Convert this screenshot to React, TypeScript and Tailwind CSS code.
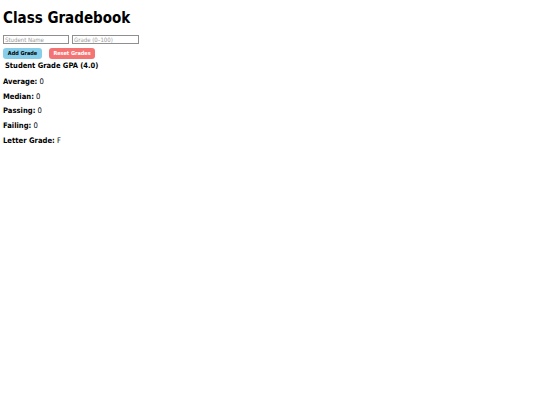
export default function App() {
  const rows = [
    ["Average:", "0"],
    ["Median:", "0"],
    ["Passing:", "0"],
    ["Failing:", "0"],
    ["Letter Grade:", "F"],
  ];
  return (
    <div
      className="min-h-[405px] w-[540px] bg-white px-[3px] pt-[8px] text-black"
      style={{ fontFamily: '"DejaVu Sans Condensed", "DejaVu Sans", Verdana, sans-serif' }}
    >
      <h1 className="text-[15px] font-bold leading-[20px]">Class Gradebook</h1>
      <div className="mt-[7px] flex gap-[3px]">
        <input
          className="h-[9px] w-[66px] border border-[#8f8f8f] px-[1px] text-[6px] outline-none placeholder:text-[#9a9a9a]"
          placeholder="Student Name"
        />
        <input
          className="h-[9px] w-[67px] border border-[#8f8f8f] px-[1px] text-[6px] outline-none placeholder:text-[#9a9a9a]"
          placeholder="Grade (0–100)"
        />
      </div>
      <div className="mt-[4px] flex gap-[7px]">
        <button className="h-[11px] w-[39px] rounded-[3px] bg-[#87ceeb] text-[5.5px] font-bold leading-none text-black">
          Add Grade
        </button>
        <button className="h-[11px] w-[46px] rounded-[3px] bg-[#f47474] text-[5.5px] font-bold leading-none text-white">
          Reset Grades
        </button>
      </div>
      <h2 className="ml-[2px] mt-[2.2px] text-[7.5px] font-bold leading-[10px]">Student Grade GPA (4.0)</h2>
      <div className="mt-[3.8px] flex flex-col">
        {rows.map(([k, v]) => (
          <p key={k} className="text-[7.6px] leading-[14.7px]">
            <span className="font-bold">{k}</span> {v}
          </p>
        ))}
      </div>
    </div>
  );
}
